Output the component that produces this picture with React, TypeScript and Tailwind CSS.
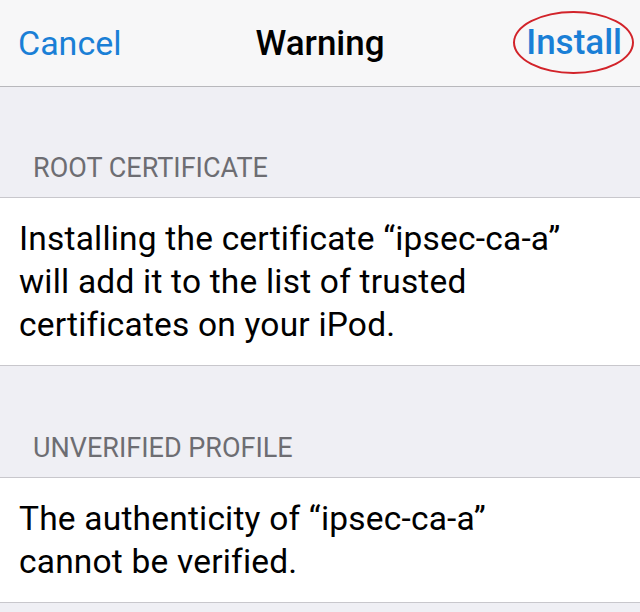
export default function App() {
  return (
    <div className="w-[640px] h-[612px] overflow-hidden bg-[#efeff4] font-['Roboto',sans-serif] antialiased">
      {/* nav bar */}
      <header className="h-[87px] bg-[#f7f7f8] border-b border-[#b8b8bc] grid grid-cols-[1fr_auto_1fr] items-center px-[18px]">
        <button className="justify-self-start text-[34px] text-[#1a7fd6] leading-none">Cancel</button>
        <h1 className="text-[35px] font-medium text-black leading-none">Warning</h1>
        <div className="justify-self-end relative">
          <span className="text-[35px] font-medium text-[#1a7fd6] leading-none">Install</span>
          <div className="absolute -left-[13px] -right-[12px] -top-[14px] -bottom-[13px] rounded-[50%] border-2 border-[#d2232a]"></div>
        </div>
      </header>

      <section>
        <div className="h-[110px] flex items-end px-[33px] pb-[14px]">
          <span className="text-[27px] leading-[30px] text-[#6d6d72]">ROOT CERTIFICATE</span>
        </div>
        <div className="bg-white border-y border-[#c8c7cc] px-[19px] py-[19px]">
          <p className="text-[33.5px] tracking-[0.2px] leading-[43px] text-black">
            Installing the certificate “ipsec-ca-a”
            <br />
            will add it to the list of trusted
            <br />
            certificates on your iPod.
          </p>
        </div>
      </section>

      <section>
        <div className="h-[111px] flex items-end px-[33px] pb-[14px]">
          <span className="text-[27px] leading-[30px] text-[#6d6d72]">UNVERIFIED PROFILE</span>
        </div>
        <div className="bg-white border-y border-[#c8c7cc] px-[19px] py-[19px]">
          <p className="text-[33.5px] tracking-[0.2px] leading-[43px] text-black">
            The authenticity of “ipsec-ca-a”
            <br />
            cannot be verified.
          </p>
        </div>
      </section>
    </div>
  );
}
